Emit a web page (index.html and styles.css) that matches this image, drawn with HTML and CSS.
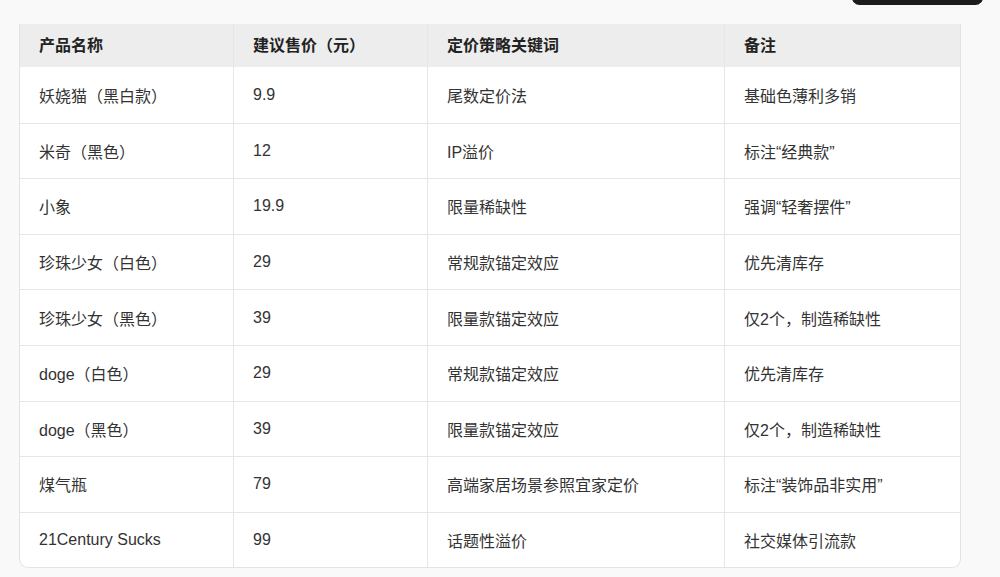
FILE: index.html
```html
<!DOCTYPE html>
<html lang="zh-CN">
<head>
<meta charset="utf-8">
<link rel="stylesheet" href="styles.css">
</head>
<body>
<div class="pill"></div>
<div class="wrap">
<table class="pricing">
<colgroup>
<col class="c1"><col class="c2"><col class="c3"><col class="c4">
</colgroup>
<thead>
<tr><th>产品名称</th><th>建议售价（元）</th><th>定价策略关键词</th><th>备注</th></tr>
</thead>
<tbody>
<tr><td>妖娆猫（黑白款）</td><td>9.9</td><td>尾数定价法</td><td>基础色薄利多销</td></tr>
<tr><td>米奇（黑色）</td><td>12</td><td>IP溢价</td><td>标注“经典款”</td></tr>
<tr><td>小象</td><td>19.9</td><td>限量稀缺性</td><td>强调“轻奢摆件”</td></tr>
<tr><td>珍珠少女（白色）</td><td>29</td><td>常规款锚定效应</td><td>优先清库存</td></tr>
<tr><td>珍珠少女（黑色）</td><td>39</td><td>限量款锚定效应</td><td>仅2个，制造稀缺性</td></tr>
<tr><td>doge（白色）</td><td>29</td><td>常规款锚定效应</td><td>优先清库存</td></tr>
<tr><td>doge（黑色）</td><td>39</td><td>限量款锚定效应</td><td>仅2个，制造稀缺性</td></tr>
<tr><td>煤气瓶</td><td>79</td><td>高端家居场景参照宜家定价</td><td>标注“装饰品非实用”</td></tr>
<tr><td>21Century Sucks</td><td>99</td><td>话题性溢价</td><td>社交媒体引流款</td></tr>
</tbody>
</table>
</div>
</body>
</html>
```
FILE: styles.css
```css
html, body {
  margin: 0;
  padding: 0;
  background: #f9f9f9;
}
body {
  width: 1000px;
  height: 577px;
  overflow: hidden;
  position: relative;
  font-family: "Liberation Sans", "Noto Sans CJK SC", sans-serif;
  color: #333;
}
.pill {
  position: absolute;
  left: 852px;
  top: -10px;
  width: 131px;
  height: 15px;
  background: #1c1c1c;
  border-radius: 10px;
}
.wrap {
  padding: 24px 0 0 19px;
}
.pricing {
  width: 941px;
  border-collapse: separate;
  border-spacing: 0;
  background: #fff;
  border: 1px solid #e3e3e3;
  border-top: none;
  border-radius: 0 0 9px 9px;
  overflow: hidden;
  font-size: 16px;
  table-layout: fixed;
}
.c1 { width: 214px; }
.c2 { width: 194px; }
.c3 { width: 297px; }
.c4 { width: 235px; }
.pricing th, .pricing td {
  text-align: left;
  padding: 0 0 0 19px;
  border-right: 1px solid #e6e6e6;
  white-space: nowrap;
}
.pricing th:last-child, .pricing td:last-child {
  border-right: none;
}
.pricing th {
  height: 43px;
  background: #ededed;
  font-weight: bold;
  color: #222;
  vertical-align: middle;
  padding-bottom: 3px;
  box-sizing: border-box;
}
.pricing td {
  height: 55.6px;
  box-sizing: border-box;
  border-top: 1px solid #e6e6e6;
  color: #333;
}
.pricing thead + tbody tr:first-child td {
  border-top: none;
}
```
